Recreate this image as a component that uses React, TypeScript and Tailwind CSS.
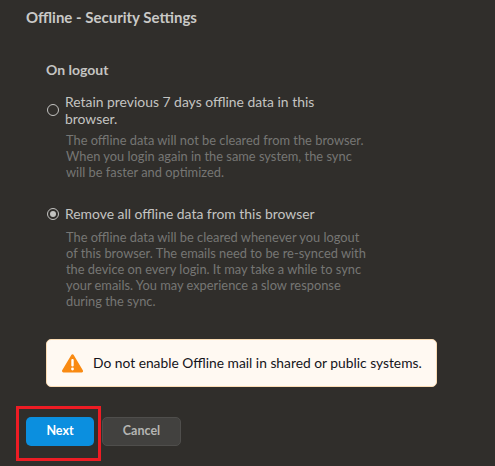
import { useState } from 'react';

function Radio({ checked }: { checked?: boolean }) {
  return (
    <span className="ml-[1px] flex h-[12px] w-[12px] shrink-0 items-center justify-center rounded-full border-[1.5px] border-[#c4c4c2]">
      {checked && <span className="h-[6px] w-[6px] rounded-full bg-[#c4c4c2]" />}
    </span>
  );
}

function WarnIcon() {
  return (
    <svg width="21" height="19" viewBox="0 0 21 19" className="shrink-0">
      <path
        d="M10.5 1.8 L19.6 17 L1.4 17 Z"
        fill="#f98a12"
        stroke="#f98a12"
        strokeWidth="2.8"
        strokeLinejoin="round"
      />
      <rect x="9.3" y="5" width="2.4" height="7.5" rx="1" fill="#fff" />
      <circle cx="10.5" cy="15" r="1.4" fill="#fff" />
    </svg>
  );
}

export default function App() {
  const [choice] = useState('remove');

  return (
    <div className="relative h-[466px] w-[495px] overflow-hidden bg-[#302e2b] font-['Lato','Noto_Sans',sans-serif]">
      <h1 className="pl-[26px] pt-[8px] text-[15px] leading-[18px] font-bold text-[#c9c9c7]">
        Offline - Security Settings
      </h1>

      <div className="pl-[46px] pt-[35px]">
        <h2 className="text-[14px] leading-[18px] font-bold text-[#c4c4c2]">On logout</h2>

        <div className="mt-[14px] w-[326px]">
          <div className="flex items-center gap-[6px]">
            <Radio checked={choice === 'retain'} />
            <span className="w-[270px] text-[13.9px] leading-[17px] text-[#c4c4c2]">
              Retain previous 7 days offline data in this browser.
            </span>
          </div>
          <p className="mt-[5px] pl-[20px] text-[12.85px] leading-[16px] text-[#767674]">
            The offline data will not be cleared from the browser. When you login again in the same system, the sync will be faster and optimized.
          </p>
        </div>

        <div className="mt-[25px] w-[326px]">
          <div className="flex items-center gap-[6px]">
            <Radio checked={choice === 'remove'} />
            <span className="text-[13.9px] leading-[17px] text-[#c4c4c2]">
              Remove all offline data from this browser
            </span>
          </div>
          <p className="mt-[7px] pl-[20px] text-[12.85px] leading-[16px] text-[#767674]">
            The offline data will be cleared whenever you logout of this browser. The emails need to be re-synced with the device on every login. It may take a while to sync your emails. You may experience a slow response during the sync.
          </p>
        </div>

        <div className="mt-[30px] flex h-[48px] w-[391px] items-center gap-[10px] rounded-[5px] border border-[#fbdcb4] bg-[#fff9f2] pl-[15px]">
          <WarnIcon />
          <span className="text-[13.8px] text-[#14141a]">Do not enable Offline mail in shared or public systems.</span>
        </div>
      </div>

      <div className="flex gap-[8px] pl-[26px] pt-[30px]">
        <button className="h-[29px] w-[68px] rounded-[5px] bg-[#0b8fdf] text-[12.5px] font-bold text-white">Next</button>
        <button className="h-[29px] w-[79px] rounded-[5px] border border-[#4f4e4c] bg-[#42413f] text-[12.5px] font-bold text-[#b5b5b3]">Cancel</button>
      </div>

      <div className="absolute left-[16px] top-[406px] h-[55px] w-[85px] border-[3px] border-[#ed1c24]" />
    </div>
  );
}
